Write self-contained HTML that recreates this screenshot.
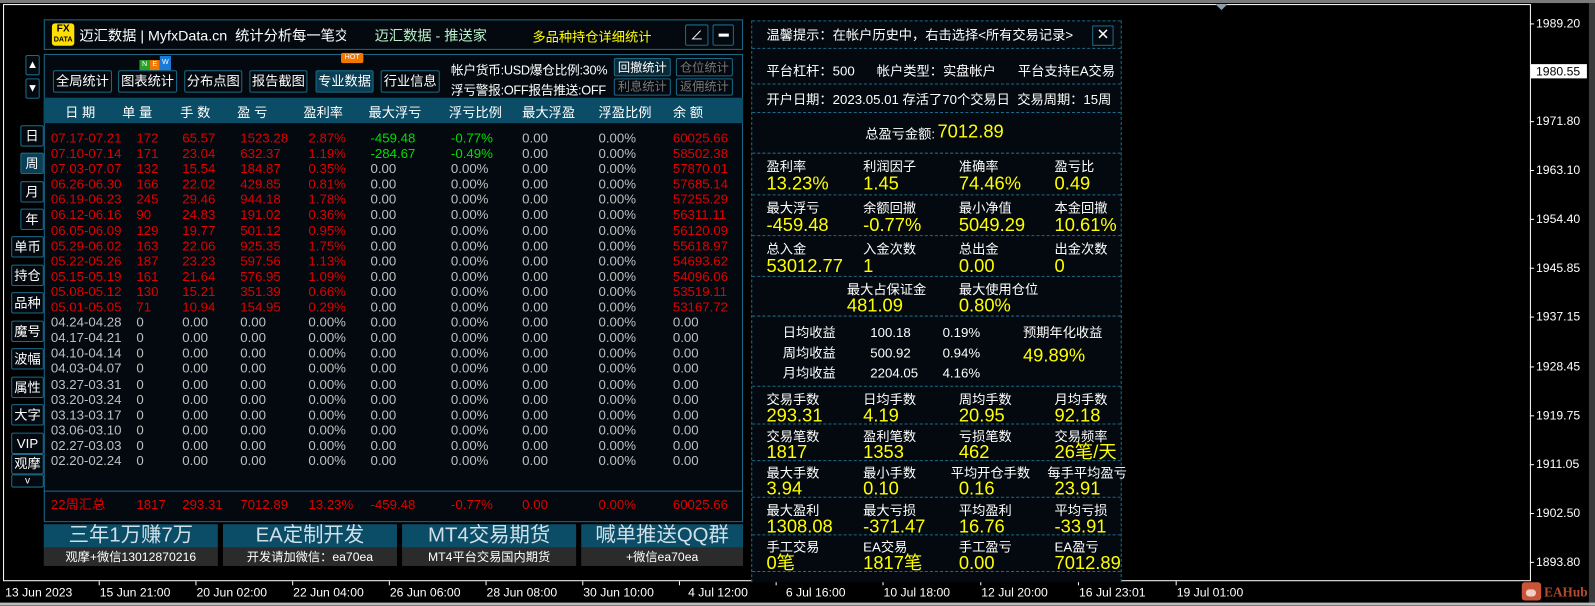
<!DOCTYPE html>
<html><head><meta charset="utf-8"><style>
*{margin:0;padding:0;box-sizing:border-box}
body{width:1595px;height:606px;overflow:hidden;background:#000;font-family:"Liberation Sans","Noto Sans CJK SC",sans-serif;color:#fff}
#w{position:absolute;left:0;top:0;width:1567px;height:595px;transform:scale(1.0179);transform-origin:0 0}
.a{position:absolute;white-space:nowrap}
.plot{position:absolute;left:3px;top:4px;width:1501px;height:567px;border:1px solid #fff}
.pl{position:absolute;left:1509px;font-family:"Liberation Sans",sans-serif;font-size:12px;color:#fff;line-height:14px}
.tk{position:absolute;left:1503px;width:4px;height:1px;background:#fff}
.tl{position:absolute;top:575px;font-family:"Liberation Sans",sans-serif;font-size:12px;color:#fff;white-space:nowrap}
.tt{position:absolute;top:571px;width:1px;height:4px;background:#fff}
.box{position:absolute;border:1px solid #1b6a88;background:#03090e}
.btn{position:absolute;border:1px solid #1b6a88;border-radius:2px;font-size:13px;text-align:center;line-height:20px;color:#fff;background:#03090e;white-space:nowrap}
.sb{position:absolute;border:1px solid #1b6a88;border-radius:2px;font-size:12px;text-align:center;color:#fff;background:#03090e;white-space:nowrap}
.hd{position:absolute;left:43px;top:96px;width:687px;height:25px;background:#0b4c66}
.hd span{position:absolute;top:4px;font-size:13px;color:#fff;white-space:nowrap}
.rows{position:absolute;left:0;top:128px}
.r{position:relative;height:15.1px;font-size:13px;line-height:15px;white-space:nowrap}
.r span{position:absolute;white-space:nowrap}
.R{color:#e00000}.G{color:#c0c0c0}.N{color:#00e000}
.c0{left:50px}.c1{left:134px}.c2{left:179px}.c3{left:236px}.c4{left:303px}.c5{left:364px}.c6{left:443px}.c7{left:513px}.c8{left:588px}.c9{left:661px}
.rp{position:absolute;left:738px;top:20px;width:364px;height:552px;background:#03090e;border-left:1px dashed #1b6a88;border-right:1px dashed #1b6a88}
.hl{position:absolute;left:0;width:362px;border-top:1px dashed #1b6a88}
.lb{position:absolute;font-size:13px;color:#fff;line-height:15px;white-space:nowrap}
.vl{position:absolute;font-size:18px;color:#ffff00;line-height:18px;white-space:nowrap}
.big{position:absolute;top:515px;height:23px;background:#0b4c66;color:#cfe0e8;font-size:20px;text-align:center;line-height:23px;white-space:nowrap}
.sub{position:absolute;top:538px;height:18px;background:#2b2b2b;color:#fff;font-size:12px;text-align:center;line-height:18px;white-space:nowrap}
</style></head><body><div id="w">
<div class="a" style="left:0;top:0;width:1567px;height:3px;background:#7a7a7a"></div>
<div class="a" style="left:1561px;top:3px;width:6px;height:592px;background:#3a3a3a"></div>
<div class="a" style="left:0;top:592px;width:1567px;height:3px;background:#bbb"></div>
<div class="plot"></div>
<div class="a" style="left:1194px;top:4px;width:0;height:0;border-left:6px solid transparent;border-right:6px solid transparent;border-top:6px solid #8a9aa6"></div>
<div class="tk" style="top:23px"></div><div class="pl" style="top:16px">1989.20</div>
<div class="a" style="left:1504px;top:63px;width:55px;height:14px;background:#fff"></div>
<div class="pl" style="top:63px;color:#000">1980.55</div>
<div class="tk" style="top:119px"></div><div class="pl" style="top:112px">1971.80</div>
<div class="tk" style="top:167px"></div><div class="pl" style="top:160px">1963.10</div>
<div class="tk" style="top:215px"></div><div class="pl" style="top:208px">1954.40</div>
<div class="tk" style="top:263px"></div><div class="pl" style="top:256px">1945.85</div>
<div class="tk" style="top:311px"></div><div class="pl" style="top:304px">1937.15</div>
<div class="tk" style="top:360px"></div><div class="pl" style="top:353px">1928.45</div>
<div class="tk" style="top:408px"></div><div class="pl" style="top:401px">1919.75</div>
<div class="tk" style="top:456px"></div><div class="pl" style="top:449px">1911.05</div>
<div class="tk" style="top:504px"></div><div class="pl" style="top:497px">1902.50</div>
<div class="tk" style="top:552px"></div><div class="pl" style="top:545px">1893.80</div>
<div class="tl" style="left:5px">13 Jun 2023</div>
<div class="tt" style="left:97px"></div><div class="tl" style="left:98px">15 Jun 21:00</div>
<div class="tt" style="left:192px"></div><div class="tl" style="left:193px">20 Jun 02:00</div>
<div class="tt" style="left:287px"></div><div class="tl" style="left:288px">22 Jun 04:00</div>
<div class="tt" style="left:382px"></div><div class="tl" style="left:383px">26 Jun 06:00</div>
<div class="tt" style="left:477px"></div><div class="tl" style="left:478px">28 Jun 08:00</div>
<div class="tt" style="left:572px"></div><div class="tl" style="left:573px">30 Jun 10:00</div>
<div class="tt" style="left:667px"></div><div class="tl" style="left:676px">4 Jul 12:00</div>
<div class="tt" style="left:762px"></div><div class="tl" style="left:772px">6 Jul 16:00</div>
<div class="tt" style="left:867px"></div><div class="tl" style="left:868px">10 Jul 18:00</div>
<div class="tt" style="left:963px"></div><div class="tl" style="left:964px">12 Jul 20:00</div>
<div class="tt" style="left:1059px"></div><div class="tl" style="left:1060px">16 Jul 23:01</div>
<div class="tt" style="left:1155px"></div><div class="tl" style="left:1156px">19 Jul 01:00</div>
<div class="a" style="left:1495px;top:572px;width:19px;height:18px;background:#c8553a;border-radius:3px"></div>
<div class="a" style="left:1499px;top:579px;width:10px;height:7px;background:#f0d0c0;border-radius:4px"></div>
<div class="a" style="left:1517px;top:574px;font-family:'Liberation Serif',serif;font-size:13px;font-weight:bold;color:#b84a30">EAHub</div>

<div class="box" style="left:43px;top:19px;width:687px;height:30px"></div>
<div class="a" style="left:51px;top:23px;width:22px;height:22px;background:#ffe000;border-radius:3px;color:#000;font-weight:bold;text-align:center;font-size:10px;line-height:10px;padding-top:1px">FX<br><span style="font-size:7px">DATA</span></div>
<div class="a" style="left:78px;top:25px;font-size:14px;color:#fff;width:262px;overflow:hidden">迈汇数据 | MyfxData.cn&nbsp; 统计分析每一笔交易</div>
<div class="a" style="left:368px;top:25px;font-size:14px;color:#b8f0c8">迈汇数据 - 推送家</div>
<div class="a" style="left:523px;top:26px;font-size:13px;color:#ffff00">多品种持仓详细统计</div>
<div class="sb" style="left:673px;top:24px;width:23px;height:21px;font-size:13px;line-height:19px">∠</div>
<div class="sb" style="left:700px;top:24px;width:21px;height:21px"><div class="a" style="left:5px;top:8px;width:10px;height:3px;background:#fff"></div></div>
<div class="box" style="left:43px;top:53px;width:687px;height:460px"></div>
<div class="a" style="left:137px;top:59px;width:10px;height:10px;background:#2aa02a;font-size:7px;text-align:center;color:#fff;line-height:10px">N</div>
<div class="a" style="left:147px;top:59px;width:10px;height:10px;background:#f07800;font-size:7px;text-align:center;color:#fff;line-height:10px">E</div>
<div class="a" style="left:157px;top:55px;width:11px;height:14px;background:#1a7ad8;font-size:7px;text-align:center;color:#fff;line-height:14px">W</div>
<div class="a" style="left:335px;top:52px;width:22px;height:10px;background:#f07800;font-size:7px;text-align:center;color:#fff;line-height:10px;border-radius:2px">HOT</div>
<div class="btn" style="left:52px;top:69px;width:58px;height:22px">全局统计</div>
<div class="btn" style="left:116px;top:69px;width:58px;height:22px">图表统计</div>
<div class="btn" style="left:181px;top:69px;width:57px;height:22px">分布点图</div>
<div class="btn" style="left:245px;top:69px;width:57px;height:22px">报告截图</div>
<div class="btn" style="left:310px;top:69px;width:57px;height:22px;background:#0b3f55">专业数据</div>
<div class="btn" style="left:374px;top:69px;width:58px;height:22px">行业信息</div>
<div class="a" style="left:443px;top:58px;font-size:12.5px;letter-spacing:-0.3px;color:#fff">帐户货币:USD爆仓比例:30%</div>
<div class="a" style="left:443px;top:78px;font-size:12.5px;letter-spacing:-0.3px;color:#fff">浮亏警报:OFF报告推送:OFF</div>
<div class="sb" style="left:603px;top:57px;width:56px;height:18px;line-height:16px;background:#0a2a38">回撤统计</div>
<div class="sb" style="left:664px;top:57px;width:56px;height:18px;line-height:16px;color:#777">仓位统计</div>
<div class="sb" style="left:603px;top:77px;width:56px;height:17px;line-height:15px;color:#777">利息统计</div>
<div class="sb" style="left:664px;top:77px;width:56px;height:17px;line-height:15px;color:#777">返佣统计</div>
<div class="hd">
<span style="left:21px">日 期</span><span style="left:77px">单 量</span><span style="left:134px">手 数</span><span style="left:190px">盈 亏</span><span style="left:255px">盈利率</span><span style="left:319px">最大浮亏</span><span style="left:398px">浮亏比例</span><span style="left:470px">最大浮盈</span><span style="left:545px">浮盈比例</span><span style="left:618px">余 额</span>
</div>
<div class="sb" style="left:25px;top:54px;width:14px;height:20px;font-size:11px;line-height:18px">▲</div>
<div class="sb" style="left:25px;top:77px;width:14px;height:20px;font-size:11px;line-height:18px">▼</div>
<div class="sb" style="left:20px;top:123px;width:23px;height:21px;font-size:13px;line-height:19px">日</div>
<div class="sb" style="left:20px;top:150px;width:23px;height:21px;font-size:13px;line-height:19px;background:#0b3f55">周</div>
<div class="sb" style="left:20px;top:178px;width:23px;height:21px;font-size:13px;line-height:19px">月</div>
<div class="sb" style="left:20px;top:205px;width:23px;height:21px;font-size:13px;line-height:19px">年</div>
<div class="sb" style="left:11px;top:232px;width:32px;height:21px;font-size:13px;line-height:19px">单币</div>
<div class="sb" style="left:11px;top:260px;width:32px;height:21px;font-size:13px;line-height:19px">持仓</div>
<div class="sb" style="left:11px;top:287px;width:32px;height:21px;font-size:13px;line-height:19px">品种</div>
<div class="sb" style="left:11px;top:315px;width:32px;height:21px;font-size:13px;line-height:19px">魔号</div>
<div class="sb" style="left:11px;top:342px;width:32px;height:21px;font-size:13px;line-height:19px">波幅</div>
<div class="sb" style="left:11px;top:370px;width:32px;height:21px;font-size:13px;line-height:19px">属性</div>
<div class="sb" style="left:11px;top:397px;width:32px;height:21px;font-size:13px;line-height:19px">大字</div>
<div class="sb" style="left:11px;top:425px;width:32px;height:21px;font-size:13px;line-height:19px">VIP</div>
<div class="sb" style="left:11px;top:446px;width:32px;height:20px;font-size:13px;line-height:18px">观摩</div>
<div class="sb" style="left:11px;top:466px;width:32px;height:13px;font-size:10px;line-height:11px">v</div>
<div class="rows">
<div class="r R"><span class="c0">07.17-07.21</span><span class="c1">172</span><span class="c2">65.57</span><span class="c3">1523.28</span><span class="c4">2.87%</span><span class="c5 N">-459.48</span><span class="c6 N">-0.77%</span><span class="c7 G">0.00</span><span class="c8 G">0.00%</span><span class="c9">60025.66</span></div>
<div class="r R"><span class="c0">07.10-07.14</span><span class="c1">171</span><span class="c2">23.04</span><span class="c3">632.37</span><span class="c4">1.19%</span><span class="c5 N">-284.67</span><span class="c6 N">-0.49%</span><span class="c7 G">0.00</span><span class="c8 G">0.00%</span><span class="c9">58502.38</span></div>
<div class="r R"><span class="c0">07.03-07.07</span><span class="c1">132</span><span class="c2">15.54</span><span class="c3">184.87</span><span class="c4">0.35%</span><span class="c5 G">0.00</span><span class="c6 G">0.00%</span><span class="c7 G">0.00</span><span class="c8 G">0.00%</span><span class="c9">57870.01</span></div>
<div class="r R"><span class="c0">06.26-06.30</span><span class="c1">166</span><span class="c2">22.02</span><span class="c3">429.85</span><span class="c4">0.81%</span><span class="c5 G">0.00</span><span class="c6 G">0.00%</span><span class="c7 G">0.00</span><span class="c8 G">0.00%</span><span class="c9">57685.14</span></div>
<div class="r R"><span class="c0">06.19-06.23</span><span class="c1">245</span><span class="c2">29.46</span><span class="c3">944.18</span><span class="c4">1.78%</span><span class="c5 G">0.00</span><span class="c6 G">0.00%</span><span class="c7 G">0.00</span><span class="c8 G">0.00%</span><span class="c9">57255.29</span></div>
<div class="r R"><span class="c0">06.12-06.16</span><span class="c1">90</span><span class="c2">24.83</span><span class="c3">191.02</span><span class="c4">0.36%</span><span class="c5 G">0.00</span><span class="c6 G">0.00%</span><span class="c7 G">0.00</span><span class="c8 G">0.00%</span><span class="c9">56311.11</span></div>
<div class="r R"><span class="c0">06.05-06.09</span><span class="c1">129</span><span class="c2">19.77</span><span class="c3">501.12</span><span class="c4">0.95%</span><span class="c5 G">0.00</span><span class="c6 G">0.00%</span><span class="c7 G">0.00</span><span class="c8 G">0.00%</span><span class="c9">56120.09</span></div>
<div class="r R"><span class="c0">05.29-06.02</span><span class="c1">163</span><span class="c2">22.06</span><span class="c3">925.35</span><span class="c4">1.75%</span><span class="c5 G">0.00</span><span class="c6 G">0.00%</span><span class="c7 G">0.00</span><span class="c8 G">0.00%</span><span class="c9">55618.97</span></div>
<div class="r R"><span class="c0">05.22-05.26</span><span class="c1">187</span><span class="c2">23.23</span><span class="c3">597.56</span><span class="c4">1.13%</span><span class="c5 G">0.00</span><span class="c6 G">0.00%</span><span class="c7 G">0.00</span><span class="c8 G">0.00%</span><span class="c9">54693.62</span></div>
<div class="r R"><span class="c0">05.15-05.19</span><span class="c1">161</span><span class="c2">21.64</span><span class="c3">576.95</span><span class="c4">1.09%</span><span class="c5 G">0.00</span><span class="c6 G">0.00%</span><span class="c7 G">0.00</span><span class="c8 G">0.00%</span><span class="c9">54096.06</span></div>
<div class="r R"><span class="c0">05.08-05.12</span><span class="c1">130</span><span class="c2">15.21</span><span class="c3">351.39</span><span class="c4">0.66%</span><span class="c5 G">0.00</span><span class="c6 G">0.00%</span><span class="c7 G">0.00</span><span class="c8 G">0.00%</span><span class="c9">53519.11</span></div>
<div class="r R"><span class="c0">05.01-05.05</span><span class="c1">71</span><span class="c2">10.94</span><span class="c3">154.95</span><span class="c4">0.29%</span><span class="c5 G">0.00</span><span class="c6 G">0.00%</span><span class="c7 G">0.00</span><span class="c8 G">0.00%</span><span class="c9">53167.72</span></div>
<div class="r G"><span class="c0">04.24-04.28</span><span class="c1">0</span><span class="c2">0.00</span><span class="c3">0.00</span><span class="c4">0.00%</span><span class="c5">0.00</span><span class="c6">0.00%</span><span class="c7">0.00</span><span class="c8">0.00%</span><span class="c9">0.00</span></div>
<div class="r G"><span class="c0">04.17-04.21</span><span class="c1">0</span><span class="c2">0.00</span><span class="c3">0.00</span><span class="c4">0.00%</span><span class="c5">0.00</span><span class="c6">0.00%</span><span class="c7">0.00</span><span class="c8">0.00%</span><span class="c9">0.00</span></div>
<div class="r G"><span class="c0">04.10-04.14</span><span class="c1">0</span><span class="c2">0.00</span><span class="c3">0.00</span><span class="c4">0.00%</span><span class="c5">0.00</span><span class="c6">0.00%</span><span class="c7">0.00</span><span class="c8">0.00%</span><span class="c9">0.00</span></div>
<div class="r G"><span class="c0">04.03-04.07</span><span class="c1">0</span><span class="c2">0.00</span><span class="c3">0.00</span><span class="c4">0.00%</span><span class="c5">0.00</span><span class="c6">0.00%</span><span class="c7">0.00</span><span class="c8">0.00%</span><span class="c9">0.00</span></div>
<div class="r G"><span class="c0">03.27-03.31</span><span class="c1">0</span><span class="c2">0.00</span><span class="c3">0.00</span><span class="c4">0.00%</span><span class="c5">0.00</span><span class="c6">0.00%</span><span class="c7">0.00</span><span class="c8">0.00%</span><span class="c9">0.00</span></div>
<div class="r G"><span class="c0">03.20-03.24</span><span class="c1">0</span><span class="c2">0.00</span><span class="c3">0.00</span><span class="c4">0.00%</span><span class="c5">0.00</span><span class="c6">0.00%</span><span class="c7">0.00</span><span class="c8">0.00%</span><span class="c9">0.00</span></div>
<div class="r G"><span class="c0">03.13-03.17</span><span class="c1">0</span><span class="c2">0.00</span><span class="c3">0.00</span><span class="c4">0.00%</span><span class="c5">0.00</span><span class="c6">0.00%</span><span class="c7">0.00</span><span class="c8">0.00%</span><span class="c9">0.00</span></div>
<div class="r G"><span class="c0">03.06-03.10</span><span class="c1">0</span><span class="c2">0.00</span><span class="c3">0.00</span><span class="c4">0.00%</span><span class="c5">0.00</span><span class="c6">0.00%</span><span class="c7">0.00</span><span class="c8">0.00%</span><span class="c9">0.00</span></div>
<div class="r G"><span class="c0">02.27-03.03</span><span class="c1">0</span><span class="c2">0.00</span><span class="c3">0.00</span><span class="c4">0.00%</span><span class="c5">0.00</span><span class="c6">0.00%</span><span class="c7">0.00</span><span class="c8">0.00%</span><span class="c9">0.00</span></div>
<div class="r G"><span class="c0">02.20-02.24</span><span class="c1">0</span><span class="c2">0.00</span><span class="c3">0.00</span><span class="c4">0.00%</span><span class="c5">0.00</span><span class="c6">0.00%</span><span class="c7">0.00</span><span class="c8">0.00%</span><span class="c9">0.00</span></div>
</div>
<div class="a" style="left:43px;top:482px;width:687px;height:1px;background:#1b6a88"></div>
<div class="a" style="left:0;top:488px;width:740px;height:16px">
<div class="r R"><span class="c0">22周汇总</span><span class="c1">1817</span><span class="c2">293.31</span><span class="c3">7012.89</span><span class="c4">13.23%</span><span class="c5">-459.48</span><span class="c6">-0.77%</span><span class="c7">0.00</span><span class="c8">0.00%</span><span class="c9">60025.66</span></div>
</div>
<div class="big" style="left:43px;width:171px">三年1万赚7万</div>
<div class="sub" style="left:43px;width:171px">观摩+微信13012870216</div>
<div class="big" style="left:219px;width:171px">EA定制开发</div>
<div class="sub" style="left:219px;width:171px">开发请加微信：ea70ea</div>
<div class="big" style="left:395px;width:171px">MT4交易期货</div>
<div class="sub" style="left:395px;width:171px">MT4平台交易国内期货</div>
<div class="big" style="left:571px;width:159px">喊单推送QQ群</div>
<div class="sub" style="left:571px;width:159px">+微信ea70ea</div>

<div class="rp">
<div class="hl" style="top:0"></div><div class="hl" style="top:27px"></div><div class="hl" style="top:62px"></div><div class="hl" style="top:90px"></div><div class="hl" style="top:130px"></div><div class="hl" style="top:171px"></div><div class="hl" style="top:211px"></div><div class="hl" style="top:251px"></div><div class="hl" style="top:290px"></div><div class="hl" style="top:359px"></div><div class="hl" style="top:396px"></div><div class="hl" style="top:432px"></div><div class="hl" style="top:468px"></div><div class="hl" style="top:505px"></div><div class="hl" style="top:541px"></div>
<div class="lb" style="left:14px;top:7px">温馨提示：在帐户历史中，右击选择&lt;所有交易记录&gt;</div>
<div class="a" style="left:334px;top:5px;width:21px;height:20px;border:1px solid #1b6a88;font-size:15px;text-align:center;line-height:18px">✕</div>
<div class="lb" style="left:14px;top:42px">平台杠杆：500&nbsp;&nbsp;&nbsp;&nbsp;&nbsp;&nbsp;帐户类型：实盘帐户&nbsp;&nbsp;&nbsp;&nbsp;&nbsp;&nbsp;平台支持EA交易</div>
<div class="lb" style="left:14px;top:70px">开户日期：2023.05.01 存活了70个交易日&nbsp; 交易周期：15周</div>
<div class="lb" style="left:111px;top:104px">总盈亏金额:</div><div class="vl" style="left:182px;top:100px">7012.89</div>
<div class="lb" style="left:14px;top:136px">盈利率</div><div class="vl" style="left:14px;top:151px">13.23%</div>
<div class="lb" style="left:109px;top:136px">利润因子</div><div class="vl" style="left:109px;top:151px">1.45</div>
<div class="lb" style="left:203px;top:136px">准确率</div><div class="vl" style="left:203px;top:151px">74.46%</div>
<div class="lb" style="left:297px;top:136px">盈亏比</div><div class="vl" style="left:297px;top:151px">0.49</div>
<div class="lb" style="left:14px;top:177px">最大浮亏</div><div class="vl" style="left:14px;top:192px">-459.48</div>
<div class="lb" style="left:109px;top:177px">余额回撤</div><div class="vl" style="left:109px;top:192px">-0.77%</div>
<div class="lb" style="left:203px;top:177px">最小净值</div><div class="vl" style="left:203px;top:192px">5049.29</div>
<div class="lb" style="left:297px;top:177px">本金回撤</div><div class="vl" style="left:297px;top:192px">10.61%</div>
<div class="lb" style="left:14px;top:217px">总入金</div><div class="vl" style="left:14px;top:232px">53012.77</div>
<div class="lb" style="left:109px;top:217px">入金次数</div><div class="vl" style="left:109px;top:232px">1</div>
<div class="lb" style="left:203px;top:217px">总出金</div><div class="vl" style="left:203px;top:232px">0.00</div>
<div class="lb" style="left:297px;top:217px">出金次数</div><div class="vl" style="left:297px;top:232px">0</div>
<div class="lb" style="left:93px;top:257px">最大占保证金</div><div class="vl" style="left:93px;top:271px">481.09</div>
<div class="lb" style="left:203px;top:257px">最大使用仓位</div><div class="vl" style="left:203px;top:271px">0.80%</div>
<div class="lb" style="left:30px;top:299px">日均收益</div><div class="lb" style="left:116px;top:299px">100.18</div><div class="lb" style="left:187px;top:299px">0.19%</div>
<div class="lb" style="left:30px;top:319px">周均收益</div><div class="lb" style="left:116px;top:319px">500.92</div><div class="lb" style="left:187px;top:319px">0.94%</div>
<div class="lb" style="left:30px;top:339px">月均收益</div><div class="lb" style="left:116px;top:339px">2204.05</div><div class="lb" style="left:187px;top:339px">4.16%</div>
<div class="lb" style="left:266px;top:299px">预期年化收益</div><div class="vl" style="left:266px;top:320px">49.89%</div>
<div class="lb" style="left:14px;top:365px">交易手数</div><div class="vl" style="left:14px;top:379px">293.31</div>
<div class="lb" style="left:109px;top:365px">日均手数</div><div class="vl" style="left:109px;top:379px">4.19</div>
<div class="lb" style="left:203px;top:365px">周均手数</div><div class="vl" style="left:203px;top:379px">20.95</div>
<div class="lb" style="left:297px;top:365px">月均手数</div><div class="vl" style="left:297px;top:379px">92.18</div>
<div class="lb" style="left:14px;top:401px">交易笔数</div><div class="vl" style="left:14px;top:415px">1817</div>
<div class="lb" style="left:109px;top:401px">盈利笔数</div><div class="vl" style="left:109px;top:415px">1353</div>
<div class="lb" style="left:203px;top:401px">亏损笔数</div><div class="vl" style="left:203px;top:415px">462</div>
<div class="lb" style="left:297px;top:401px">交易频率</div><div class="vl" style="left:297px;top:415px">26笔/天</div>
<div class="lb" style="left:14px;top:437px">最大手数</div><div class="vl" style="left:14px;top:451px">3.94</div>
<div class="lb" style="left:109px;top:437px">最小手数</div><div class="vl" style="left:109px;top:451px">0.10</div>
<div class="lb" style="left:195px;top:437px">平均开仓手数</div><div class="vl" style="left:203px;top:451px">0.16</div>
<div class="lb" style="left:290px;top:437px">每手平均盈亏</div><div class="vl" style="left:297px;top:451px">23.91</div>
<div class="lb" style="left:14px;top:474px">最大盈利</div><div class="vl" style="left:14px;top:488px">1308.08</div>
<div class="lb" style="left:109px;top:474px">最大亏损</div><div class="vl" style="left:109px;top:488px">-371.47</div>
<div class="lb" style="left:203px;top:474px">平均盈利</div><div class="vl" style="left:203px;top:488px">16.76</div>
<div class="lb" style="left:297px;top:474px">平均亏损</div><div class="vl" style="left:297px;top:488px">-33.91</div>
<div class="lb" style="left:14px;top:510px">手工交易</div><div class="vl" style="left:14px;top:524px">0笔</div>
<div class="lb" style="left:109px;top:510px">EA交易</div><div class="vl" style="left:109px;top:524px">1817笔</div>
<div class="lb" style="left:203px;top:510px">手工盈亏</div><div class="vl" style="left:203px;top:524px">0.00</div>
<div class="lb" style="left:297px;top:510px">EA盈亏</div><div class="vl" style="left:297px;top:524px">7012.89</div>
</div>
</div></body></html>
